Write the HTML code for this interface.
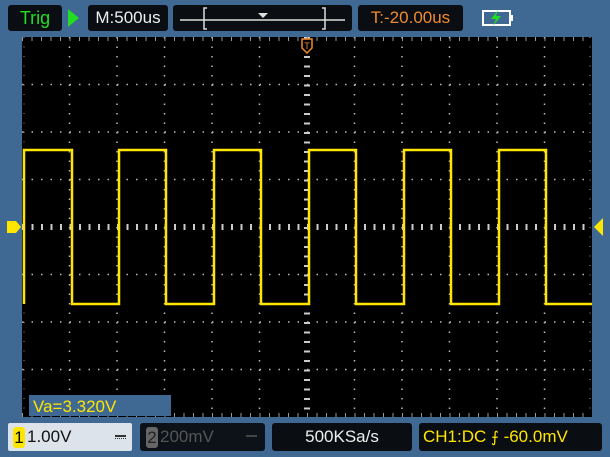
<!DOCTYPE html>
<html><head><style>
body{margin:0;width:610px;height:457px;background:#3d6690;overflow:hidden;font-family:"Liberation Sans",sans-serif}
.b{position:absolute;background:#0a0e12;border-radius:3px;font-size:17px;line-height:26px;}
</style></head><body>
<div style="position:absolute;left:0;top:0;width:610px;height:457px;background:#3f6892"></div>
<div class="b" style="left:8px;top:5px;width:54px;height:26px;color:#22dd22;text-align:center;font-size:18px">Trig</div>
<svg style="position:absolute;left:68px;top:9px" width="12" height="18"><polygon points="0,0 11,9 0,18" fill="#22dd22"/></svg>
<div class="b" style="left:88px;top:5px;width:80px;height:26px;color:#eee;text-align:center">M:500us</div>
<div class="b" style="left:173px;top:5px;width:179px;height:26px"></div>
<svg style="position:absolute;left:173px;top:5px" width="179" height="26"><line x1="7" y1="15" x2="172" y2="15" stroke="#ddd" stroke-width="1.5"/><polyline points="34,3 31,3 31,24 34,24" fill="none" stroke="#ddd" stroke-width="1.5"/><polyline points="149,3 152,3 152,24 149,24" fill="none" stroke="#ddd" stroke-width="1.5"/><polygon points="85,8 95,8 90,13" fill="#ddd"/></svg>
<div class="b" style="left:358px;top:5px;width:105px;height:26px;color:#f08a30;text-align:center">T:-20.00us</div>
<svg style="position:absolute;left:480px;top:8px" width="36" height="20"><rect x="3" y="3" width="27" height="14" fill="none" stroke="#fff" stroke-width="2"/><rect x="30" y="7" width="3" height="6" fill="#fff"/><polygon points="18,2 11,11 16,11 13,18 21,8 16,8" fill="#22dd22"/></svg>
<svg style="position:absolute;left:0;top:0" width="610" height="457">
<rect x="22" y="37" width="570" height="380" fill="#000"/>
<g stroke="#bbb" stroke-width="1.5" stroke-dasharray="1.5 8">
<line x1="22" y1="84.5" x2="592" y2="84.5"/><line x1="22" y1="132" x2="592" y2="132"/><line x1="22" y1="179.5" x2="592" y2="179.5"/><line x1="22" y1="274.5" x2="592" y2="274.5"/><line x1="22" y1="322" x2="592" y2="322"/><line x1="22" y1="369.5" x2="592" y2="369.5"/>
<line x1="69.5" y1="37" x2="69.5" y2="417"/><line x1="117" y1="37" x2="117" y2="417"/><line x1="164.5" y1="37" x2="164.5" y2="417"/><line x1="212" y1="37" x2="212" y2="417"/><line x1="259.5" y1="37" x2="259.5" y2="417"/><line x1="354.5" y1="37" x2="354.5" y2="417"/><line x1="402" y1="37" x2="402" y2="417"/><line x1="449.5" y1="37" x2="449.5" y2="417"/><line x1="497" y1="37" x2="497" y2="417"/><line x1="544.5" y1="37" x2="544.5" y2="417"/>
</g>
<g stroke="#ccc" stroke-width="2" stroke-dasharray="2 7.5">
<line x1="22" y1="227" x2="592" y2="227" stroke-width="6" stroke-dasharray="2 7.5" transform=""/>
<line x1="307" y1="37" x2="307" y2="417" stroke-width="6" stroke-dasharray="2 7.5"/>
</g>
<g stroke="#999" stroke-width="1" stroke-dasharray="1 8.5"><line x1="24" y1="37" x2="24" y2="417"/><line x1="590" y1="37" x2="590" y2="417"/><line x1="22" y1="39" x2="592" y2="39" stroke-width="4"/><line x1="22" y1="415" x2="592" y2="415" stroke-width="4"/></g>
<polyline fill="none" stroke="#ffe600" stroke-width="2.5" points="24,304 24,150 72,150 72,304 119,304 119,150 166,150 166,304 214,304 214,150 261,150 261,304 309,304 309,150 356,150 356,304 404,304 404,150 451,150 451,304 499,304 499,150 546,150 546,304 592,304"/>
<polygon points="7,221 16,221 21,227 16,233 7,233" fill="#ffe600"/>
<polygon points="603,218 603,236 594,227" fill="#ffe600"/>
<path d="M302,39 h10 v9 l-5,5 l-5,-5z" fill="#000" stroke="#f08a30" stroke-width="1.5"/>
<text x="307" y="49" font-size="9" fill="#f08a30" text-anchor="middle" font-family="Liberation Sans">T</text>
<rect x="29" y="395" width="142" height="21" fill="#3f6892"/>
<text x="33" y="412" font-size="17" fill="#ffe600" font-family="Liberation Sans">Va=3.320V</text>
</svg>
<div class="b" style="left:8px;top:423px;width:124px;height:28px;background:#dde3ea;border-radius:2px"></div>
<div style="position:absolute;left:13px;top:427px;width:12px;height:21px;background:#ffe600;border-radius:3px;font-size:17px;line-height:21px;text-align:center;color:#000">1</div>
<div style="position:absolute;left:27px;top:424px;font-size:17px;line-height:26px;color:#111">1.00V</div>
<div style="position:absolute;left:115px;top:435px;width:11px;border-top:2px solid #333;border-bottom:1px dotted #333;height:1px"></div>
<div class="b" style="left:140px;top:423px;width:125px;height:28px;background:#0c1218"></div>
<div style="position:absolute;left:146px;top:427px;width:12px;height:21px;background:#666;border-radius:3px;font-size:17px;line-height:21px;text-align:center;color:#222">2</div>
<div style="position:absolute;left:160px;top:424px;font-size:17px;line-height:26px;color:#555">200mV</div>
<div style="position:absolute;left:246px;top:435px;width:11px;border-top:2px solid #444;height:1px"></div>
<div class="b" style="left:272px;top:423px;width:140px;height:28px;color:#eee;text-align:center;line-height:28px">500KSa/s</div>
<div class="b" style="left:419px;top:423px;width:183px;height:28px;color:#ffe600;line-height:28px;padding-left:4px;box-sizing:border-box;white-space:nowrap">CH1:DC <span style="font-size:15px">&#x2A0D;</span>&nbsp;-60.0mV</div>
</body></html>
